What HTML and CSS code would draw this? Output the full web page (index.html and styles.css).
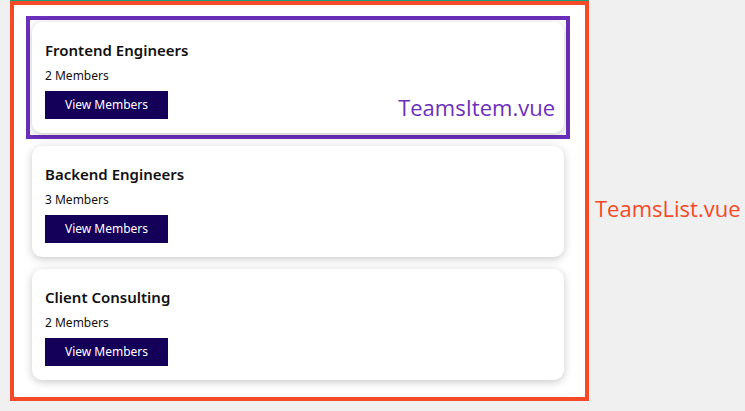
FILE: index.html
```html
<!DOCTYPE html>
<html>
<head>
<meta charset="utf-8">
<link rel="stylesheet" href="styles.css">
</head>
<body>
<div class="page">
  <div class="list-frame">
    <div class="item-frame">
      <section class="card">
        <h2 class="card-title">Frontend Engineers</h2>
        <p class="card-meta">2 Members</p>
        <button class="card-btn">View Members</button>
      </section>
      <span class="label label-item">TeamsItem.vue</span>
    </div>
    <section class="card card-plain card-second">
      <h2 class="card-title">Backend Engineers</h2>
      <p class="card-meta">3 Members</p>
      <button class="card-btn">View Members</button>
    </section>
    <section class="card card-plain card-third">
      <h2 class="card-title">Client Consulting</h2>
      <p class="card-meta">2 Members</p>
      <button class="card-btn">View Members</button>
    </section>
  </div>
  <span class="label label-list">TeamsList.vue</span>
</div>
</body>
</html>
```
FILE: styles.css
```css
html, body {
  margin: 0;
  padding: 0;
  background: #f0f0f0;
}
.page {
  display: flex;
  align-items: flex-start;
  width: 745px;
  height: 411px;
  overflow: hidden;
}
.list-frame {
  box-sizing: border-box;
  width: 579px;
  margin: 1px 0 0 10px;
  border: 4px solid #f44a27;
  box-shadow: 0 -1px 0 #1f9c7c;
  background: #ffffff;
  padding: 11px 15px 17px 12px;
  display: flex;
  flex-direction: column;
}
.item-frame {
  position: relative;
  border: 4px solid #6b2fbb;
  padding: 2px;
}
.card {
  box-sizing: border-box;
  height: 111px;
  background: #fff;
  border-radius: 10px;
  box-shadow: 0 2px 8px rgba(0, 0, 0, 0.22);
  padding: 18px 13px 14px;
  font-family: "Noto Sans", "Open Sans", sans-serif;
  color: #111;
}
.card-plain {
  margin: 0 6px;
}
.card-second {
  margin-top: 7px;
}
.card-third {
  margin-top: 12px;
}
.card-title {
  margin: 0;
  font-size: 15px;
  line-height: 20px;
  font-weight: 600;
}
.card-meta {
  margin: 8px 0 7px;
  font-size: 12px;
  line-height: 16px;
}
.card-btn {
  display: block;
  width: 123px;
  height: 28px;
  padding: 0;
  border: none;
  background: #140058;
  color: #fff;
  font-family: "Noto Sans", "Open Sans", sans-serif;
  font-size: 12px;
  line-height: 28px;
  cursor: pointer;
}
.label {
  font-family: "Open Sans", sans-serif;
  font-size: 22px;
  line-height: 30px;
  white-space: nowrap;
}
.label-item {
  position: absolute;
  right: 11px;
  top: 72px;
  color: #6b2fbb;
}
.label-list {
  margin: 193px 0 0 6px;
  color: #f44a27;
}
```
